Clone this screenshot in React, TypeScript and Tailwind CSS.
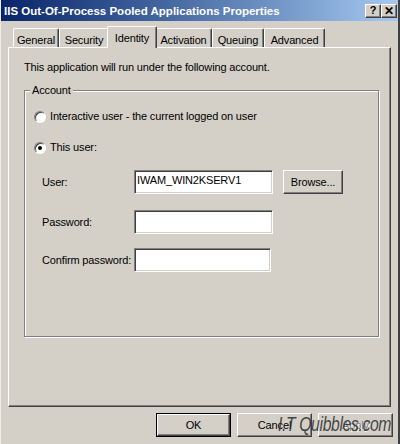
import { FC, ReactNode } from 'react'

const raised =
    'border border-t-white border-l-white border-r-[#404040] border-b-[#404040] shadow-[inset_-1px_-1px_0_#808080] bg-[#d4d0c8]'
const sunken =
    'border border-t-[#808080] border-l-[#808080] border-r-white border-b-white shadow-[inset_1px_1px_0_#404040,inset_-1px_-1px_0_#d4d0c8] bg-white'

const tabs = [
    { name: 'General', w: 'w-[46px]' },
    { name: 'Security', w: 'w-[50px]' },
    { name: 'Identity', w: 'w-[46px]', active: true },
    { name: 'Activation', w: 'w-[57px]' },
    { name: 'Queuing', w: 'w-[52px]' },
    { name: 'Advanced', w: 'w-[61px]' },
]

const Radio: FC<{ checked?: boolean; children: ReactNode }> = ({
    checked,
    children,
}) => (
    <div className="flex items-center gap-[4px] h-[13px]">
        <div className="w-[12px] h-[12px] rounded-full border border-t-[#808080] border-l-[#808080] border-r-white border-b-white bg-white shadow-[inset_1px_1px_0_#404040] flex items-center justify-center">
            {checked && <div className="w-[4px] h-[4px] rounded-full bg-black" />}
        </div>
        <span className="leading-[13px]">{children}</span>
    </div>
)

const Field: FC<{ label: string; value?: string; w?: string; children?: ReactNode }> = ({
    label,
    value,
    w = 'w-[139px]',
    children,
}) => (
    <div className="flex items-center">
        <span className="w-[92px] flex-none whitespace-nowrap leading-[13px]">{label}</span>
        <div className={`${sunken} ${w} flex-none h-[24px] flex items-center pl-[2px] pb-[4px]`}>
            {value}
        </div>
        {children}
    </div>
)

const App: FC = () => {
    return (
        <div className="w-[400px] h-[444px] bg-[#d4d0c8] flex flex-col border-r-2 border-r-[#404040] border-l border-l-[#f0eee8] relative overflow-hidden text-[11px] tracking-[-0.15px] text-black font-['Liberation_Sans',Arial,sans-serif]">
            {/* title bar */}
            <div className="h-[21px] flex items-center justify-between bg-gradient-to-r from-[#0a246a] to-[#a6caf0] pl-[3px] pr-[1px]">
                <span className="text-white font-bold text-[11.5px] leading-[14px] tracking-normal">
                    IIS Out-Of-Process Pooled Applications Properties
                </span>
                <div className="flex">
                    <div className={`${raised} w-[16px] h-[14px] flex items-center justify-center font-bold text-[11px] leading-none`}>
                        ?
                    </div>
                    <div className={`${raised} w-[16px] h-[14px] flex items-center justify-center font-bold text-[12px] leading-none`}>
                        ✕
                    </div>
                </div>
            </div>

            <div className="flex flex-col pl-[7px] pr-[5px] pt-[5px]">
                {/* tabs */}
                <div className="flex items-end h-[21px] pl-[5px]">
                    {tabs.map((t) =>
                        t.active ? (
                            <div
                                key={t.name}
                                className={`${t.w} h-[22px] -mb-px flex justify-center relative z-10`}
                            >
                                <div className="absolute inset-y-0 -left-[2px] -right-[2px] bg-[#d4d0c8] border-t border-l border-t-white border-l-white border-r border-r-[#404040] shadow-[inset_-1px_0_0_#808080] rounded-t-[2px] flex justify-center pt-[3px]">
                                    Identity
                                </div>
                            </div>
                        ) : (
                            <div
                                key={t.name}
                                className={`${t.w} h-[19px] bg-[#d4d0c8] border-t border-l border-t-white border-l-white border-r border-r-[#404040] shadow-[inset_-1px_0_0_#808080] rounded-t-[2px] flex justify-center pt-[3px]`}
                            >
                                {t.name}
                            </div>
                        )
                    )}
                </div>

                {/* panel */}
                <div className="h-[360px] mr-[2px] border border-t-white border-l-white border-r-[#404040] border-b-[#404040] shadow-[inset_-1px_-1px_0_#808080] pl-[15px] pr-[11px] pt-[13px]">
                    <p className="leading-[13px]">
                        This application will run under the following account.
                    </p>

                    <div className="relative mt-[16px] h-[247px] border border-[#808080] shadow-[inset_1px_1px_0_#fff,1px_1px_0_#fff] pl-[9px] pt-[19px]">
                        <span className="absolute -top-[7px] left-[5px] px-[2px] bg-[#d4d0c8] leading-[13px]">
                            Account
                        </span>
                        <Radio>Interactive user - the current logged on user</Radio>
                        <div className="mt-[18px]">
                            <Radio checked>This user:</Radio>
                        </div>

                        <div className="pl-[8px] mt-[16px] flex flex-col">
                            <Field label="User:" value="IWAM_WIN2KSERV1">
                                <button className={`${raised} ml-[10px] w-[60px] h-[24px] flex items-center justify-center`}>
                                    Browse...
                                </button>
                            </Field>
                            <div className="mt-[16px]">
                                <Field label="Password:" />
                            </div>
                            <div className="mt-[14px]">
                                <Field label="Confirm password:" w="w-[137px]" />
                            </div>
                        </div>
                    </div>
                </div>

                {/* buttons */}
                <div className="flex justify-end gap-[6px] mt-[6px]">
                    <button className="w-[75px] h-[24px] border border-black">
                        <div className={`${raised} w-full h-full flex items-center justify-center`}>
                            OK
                        </div>
                    </button>
                    <button className={`${raised} w-[75px] h-[24px] flex items-center justify-center`}>
                        Cancel
                    </button>
                    <button className={`${raised} w-[75px] h-[24px] flex items-center justify-center text-[#808080] [text-shadow:1px_1px_0_#fff]`}>
                        Apply
                    </button>
                </div>
            </div>

            {/* watermark */}
            <span className="absolute left-[277px] top-[412px] origin-left scale-x-[0.75] whitespace-nowrap italic text-[21px] leading-[24px] tracking-[-0.5px] text-[#2a2a2a]/85 font-['Liberation_Sans',sans-serif]">
                I.T Quibbles.com
            </span>
        </div>
    )
}

export default App
